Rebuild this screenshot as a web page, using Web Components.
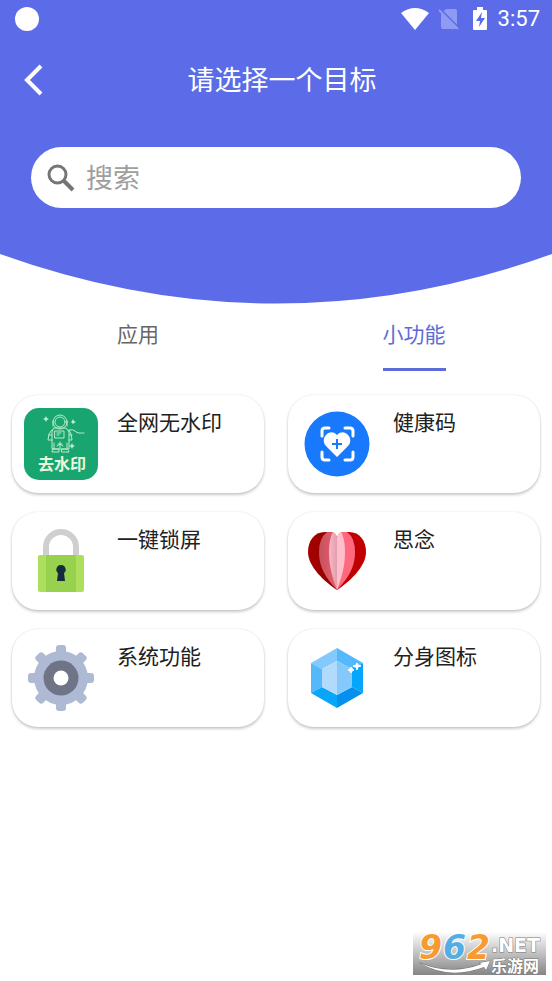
<!DOCTYPE html>
<html lang="zh-CN">
<head>
<meta charset="utf-8">
<meta name="viewport" content="width=device-width, initial-scale=1">
<title>请选择一个目标</title>
<style>
  body {
    margin: 0;
    background: #fff;
    color: #212121;
    font-family: Roboto, "Noto Sans CJK SC", sans-serif;
    --primary: #5c6ce8;
  }
  svg { display: block; }
</style>
</head>
<body>
<app-page>
  <app-header slot="header" heading="请选择一个目标">
    <status-bar slot="status" time="3:57"></status-bar>
    <search-field placeholder="搜索"></search-field>
  </app-header>

  <tab-bar>
    <tab-item label="应用"></tab-item>
    <tab-item label="小功能" selected></tab-item>
  </tab-bar>

  <feature-grid>
    <feature-card label="全网无水印">
      <svg width="74" height="72" viewBox="0 0 74 72">
        <rect width="74" height="72" rx="15" fill="#19a56f"/>
        <g fill="none" stroke="#b9ecc9" stroke-width="1" stroke-linejoin="round" stroke-linecap="round">
          <circle cx="36" cy="14" r="7"/>
          <circle cx="36" cy="14" r="5"/>
          <path d="M29 13v5M43 13v5M30 20h12l3 4v17H28V24zM28 22l-3 4-1 6h4M45 22l2 4 1 6h-3M25 27h3M45 27h3"/>
          <path d="M31 23h9v7h-9zM33 25h4M33 27h2M30 41v-6M43 41v-6M36 34v6M33 38l3-2 3 2M34 36h4"/>
          <path d="M29 41h6v3h-7q0-2 1-3zM38 41h5q2 1 2 3h-7zM45 22q4-1 6 1t4 2 5 0"/>
        </g>
        <path d="M22 8l1 2 2 1-2 1-1 2-1-2-2-1 2-1zM49 11l1 2 2 1-2 1-1 1-1-1-1-1 1-1zM48 35l1 2 2 1-2 1-1 2-1-2-2-1 2-1z" fill="#b9ecc9"/>
        <text x="38" y="62" text-anchor="middle" font-family="Noto Sans CJK SC, sans-serif" font-size="16" font-weight="700" fill="#e9f8dc">去水印</text>
      </svg>
    </feature-card>

    <feature-card label="健康码">
      <svg width="66" height="66" viewBox="0 0 66 66">
        <circle cx="33" cy="33" r="32.500" fill="#1879fc"/>
        <g fill="none" stroke="#fff" stroke-width="3" stroke-linecap="round" stroke-linejoin="round">
          <path d="M18 25v-5q0-3 3-3h4M41 17h5q3 0 3 3v5M49 41v5q0 3-3 3h-5M25 49h-4q-3 0-3-3v-5"/>
        </g>
        <path d="M33 24c4-4 8-3 11 0s3 8 0 11L33 46 22 35c-3-3-3-8 0-11s7-4 11 0z" fill="#fff"/>
        <path d="M33 28v10M28 33h10" stroke="#1879fc" stroke-width="2"/>
      </svg>
    </feature-card>

    <feature-card label="一键锁屏">
      <svg width="48" height="64" viewBox="0 0 48 64">
        <path d="M9 28V18a15 15 0 0 1 30 0v10" fill="none" stroke="#cfcfcf" stroke-width="6"/>
        <rect x="1" y="26" width="46" height="37" rx="2" fill="#acdf5e"/>
        <path d="M9 26h30v37H9z" fill="#98d14d"/>
        <path d="M24 36a4.500 4.500 0 0 1 3 8l1 8h-8l1-8a4.500 4.500 0 0 1 3-8z" fill="#152c3d"/>
      </svg>
    </feature-card>

    <feature-card label="思念">
      <svg width="60" height="60" viewBox="0 0 60 60">
        <defs>
          <linearGradient id="fold-dark"><stop stop-color="#a80000"/><stop offset="1" stop-color="#8c0000"/></linearGradient>
          <linearGradient id="fold-rose"><stop stop-color="#c4525e"/><stop offset="1" stop-color="#e95f70"/></linearGradient>
          <linearGradient id="fold-pink"><stop stop-color="#ffb7c8"/><stop offset="1" stop-color="#df9fad"/></linearGradient>
        </defs>
        <path d="M30 59C18 51 1 36 1 21 1 10 7 1 18 1h7l5 5z" fill="url(#fold-dark)"/>
        <path d="M30 59c12-8 29-23 29-38C59 10 53 1 42 1h-7l-5 5z" fill="#c00000"/>
        <path d="M30 59C18 46 12 36 12 21q0-14 8-20h6l4 5z" fill="url(#fold-rose)"/>
        <path d="M30 59c12-13 18-23 18-38q0-14-8-20h-6l-4 5z" fill="#ff697d"/>
        <path d="M30 59c-5-14-8-24-8-38 0-10 2-17 4-20q3 1 4 5z" fill="url(#fold-pink)"/>
        <path d="M30 59c5-14 8-24 8-38 0-10-2-17-4-20q-3 1-4 5z" fill="#ffbdcd"/>
      </svg>
    </feature-card>

    <feature-card label="系统功能">
      <svg width="66" height="66" viewBox="0 0 66 66">
        <g fill="#aeb9d4">
          <circle cx="33" cy="33" r="27"/>
          <rect x="28" width="10" height="66" rx="3"/>
          <rect x="28" width="10" height="66" rx="3" transform="rotate(45 33 33)"/>
          <rect x="28" width="10" height="66" rx="3" transform="rotate(90 33 33)"/>
          <rect x="28" width="10" height="66" rx="3" transform="rotate(135 33 33)"/>
        </g>
        <circle cx="33" cy="33" r="17.500" fill="#707487"/>
        <circle cx="33" cy="33" r="7.500" fill="#fff"/>
      </svg>
    </feature-card>

    <feature-card label="分身图标">
      <svg width="54" height="62" viewBox="0 0 54 62">
        <path d="M27 1v13L12 22 1 16z" fill="#84c9fc"/>
        <path d="M27 1l26 15-11 6-15-8z" fill="#55b8fb"/>
        <path d="M1 16l11 6v18L1 46z" fill="#55b8fb"/>
        <path d="M53 16l-11 6v18l11 6z" fill="#08a6fb"/>
        <path d="M1 46l11-6 15 8v13z" fill="#08a6fb"/>
        <path d="M53 46l-11-6-15 8v13z" fill="#0690ee"/>
        <path d="M27 14v34l-15-8V22z" fill="#b2dafc"/>
        <path d="M27 14v34l15-8V22z" fill="#84c9fc"/>
        <path d="M47 16l1 2 3 1-3 1-1 3-1-3-3-1 3-1zM41 20l1 2 2 1-2 1-1 2-1-2-2-1 2-1z" fill="#fff" stroke="#fff"/>
      </svg>
    </feature-card>
  </feature-grid>

  <site-mark slot="mark"></site-mark>
</app-page>

<script>
class AppPage extends HTMLElement {
  constructor() {
    super();
    this.attachShadow({ mode: 'open' });
    this.shadowRoot.innerHTML = `
      <style>
        :host { display: flex; flex-direction: column; min-height: 100vh; position: relative; }
        main { flex: 1; }
      </style>
      <slot name="header"></slot>
      <main><slot></slot></main>
      <slot name="mark"></slot>
    `;
  }
}
customElements.define('app-page', AppPage);

class StatusBar extends HTMLElement {
  connectedCallback() {
    this.attachShadow({ mode: 'open' });
    this.shadowRoot.innerHTML = `
      <style>
        :host { display: flex; justify-content: space-between; align-items: center; height: 37px; padding: 0 12px 0 15px; color: #fff; }
        .dot { width: 24px; height: 24px; border-radius: 50%; background: #fff; }
        .icons { display: flex; align-items: center; }
        svg { display: block; }
        .sim { margin-left: 9px; }
        .battery { margin: 0 11px 0 13px; }
        time { font-size: 22px; line-height: 24px; }
      </style>
      <span class="dot"></span>
      <div class="icons">
        <svg width="28" height="24" viewBox="0 0 28 24"><path d="M0 6Q14-4 28 6L14 23z" fill="#fff"/></svg>
        <svg class="sim" width="22" height="24" viewBox="0 0 22 24">
          <path d="M8 2h9q2 0 2 2v16q0 2-2 2H5q-2 0-2-2V7z" fill="#8f9bf2"/>
          <path d="M2 2l19 19" stroke="#5c6ce8" stroke-width="2"/>
          <path d="M1 3l19 19" stroke="#8f9bf2" stroke-width="2"/>
        </svg>
        <svg class="battery" width="14" height="24" viewBox="0 0 14 24">
          <path d="M4 0h6v3h3q1 0 1 1v18q0 1-1 1H1q-1 0-1-1V4q0-1 1-1h3z" fill="#fff"/>
          <path d="M9 5l-6 9h4l-1 6 6-9H8z" fill="#5c6ce8"/>
        </svg>
        <time>${this.getAttribute('time') || ''}</time>
      </div>
    `;
  }
}
customElements.define('status-bar', StatusBar);

class AppHeader extends HTMLElement {
  connectedCallback() {
    this.attachShadow({ mode: 'open' });
    this.shadowRoot.innerHTML = `
      <style>
        :host { display: block; color: #fff; }
        .fill { background: var(--primary); padding-bottom: 46px; }
        .bar { display: grid; grid-template-columns: 66px 1fr 54px; align-items: center; height: 86px; }
        button { display: flex; align-items: center; height: 66px; padding: 0 0 0 24px; border: 0; background: none; color: inherit; }
        h1 { margin: 0; padding-top: 2px; font-size: 27px; line-height: 40px; font-weight: 400; text-align: center; }
        .search { padding: 24px 31px 0 31px; }
        .curve { display: block; width: 100%; height: 50px; }
      </style>
      <header>
        <div class="fill">
          <slot name="status"></slot>
          <div class="bar">
            <button type="button" aria-label="返回">
              <svg width="20" height="32" viewBox="0 0 20 32"><path d="M17 2L3 16l14 14" fill="none" stroke="#fff" stroke-width="4"/></svg>
            </button>
            <h1>${this.getAttribute('heading') || ''}</h1>
          </div>
          <div class="search"><slot></slot></div>
        </div>
        <svg class="curve" viewBox="0 0 552 50" preserveAspectRatio="none"><path d="M0 0Q276 99 552 0z" fill="#5c6ce8"/></svg>
      </header>
    `;
  }
}
customElements.define('app-header', AppHeader);

class SearchField extends HTMLElement {
  connectedCallback() {
    this.attachShadow({ mode: 'open' });
    const text = this.getAttribute('placeholder') || '';
    this.shadowRoot.innerHTML = `
      <style>
        :host { display: block; }
        label { display: flex; align-items: center; gap: 11px; height: 61px; padding: 0 16px; border-radius: 31px; background: #fff; }
        svg { flex: none; }
        input {
          flex: 1;
          min-width: 0;
          height: 42px;
          padding: 2px 0 0;
          border: 0;
          outline: 0;
          background: none;
          font: inherit;
          font-size: 27px;
          color: #212121;
        }
        input::placeholder { color: #9e9e9e; opacity: 1; }
      </style>
      <label>
        <svg width="28" height="28" viewBox="0 0 28 28" fill="none" stroke="#757575">
          <circle cx="10.500" cy="10.500" r="8.500" stroke-width="3"/>
          <path d="M17 17l9 9" stroke-width="4"/>
        </svg>
        <input type="text" placeholder="${text}" aria-label="${text}">
      </label>
    `;
  }
}
customElements.define('search-field', SearchField);

class TabBar extends HTMLElement {
  constructor() {
    super();
    this.attachShadow({ mode: 'open' });
    this.shadowRoot.innerHTML = `
      <style>
        :host { display: block; }
        nav { display: flex; }
        ::slotted(tab-item) { flex: 1; }
      </style>
      <nav><slot></slot></nav>
    `;
  }

  connectedCallback() {
    this.addEventListener('click', (e) => {
      const tab = e.target.closest('tab-item');
      if (!tab) return;
      this.querySelectorAll('tab-item').forEach((t) => t.toggleAttribute('selected', t === tab));
    });
  }
}
customElements.define('tab-bar', TabBar);

class TabItem extends HTMLElement {
  static get observedAttributes() { return ['selected']; }

  constructor() {
    super();
    this.attachShadow({ mode: 'open' });
  }

  connectedCallback() { this.render(); }

  attributeChangedCallback() { this.render(); }

  render() {
    this.shadowRoot.innerHTML = `
      <style>
        :host { display: flex; justify-content: center; }
        button {
          height: 67px;
          padding: 0 0 2px;
          border: 0;
          border-bottom: 3px solid transparent;
          background: none;
          color: #666;
          font: inherit;
          font-size: 21px;
          line-height: 32px;
        }
        :host([selected]) button { color: #5e6cd8; border-color: #5e6cd8; }
      </style>
      <button type="button" aria-pressed="${this.hasAttribute('selected')}">${this.getAttribute('label') || ''}</button>
    `;
  }
}
customElements.define('tab-item', TabItem);

class FeatureGrid extends HTMLElement {
  constructor() {
    super();
    this.attachShadow({ mode: 'open' });
    this.shadowRoot.innerHTML = `
      <style>
        :host { display: grid; grid-template-columns: 1fr 1fr; gap: 19px 24px; padding: 24px 12px; }
      </style>
      <slot></slot>
    `;
  }
}
customElements.define('feature-grid', FeatureGrid);

class FeatureCard extends HTMLElement {
  connectedCallback() {
    this.attachShadow({ mode: 'open' });
    this.shadowRoot.innerHTML = `
      <style>
        :host { display: block; }
        button {
          display: flex;
          align-items: flex-start;
          gap: 19px;
          width: 100%;
          padding: 12px;
          border: 0;
          border-radius: 26px;
          background: #fff;
          box-shadow: 0 2px 3px rgba(0, 0, 0, .2), 0 0 2px rgba(0, 0, 0, .12);
          color: #212121;
          font: inherit;
          font-size: 21px;
          line-height: 32px;
          text-align: left;
        }
        .icon { display: flex; align-items: center; justify-content: center; width: 74px; height: 74px; }
      </style>
      <button type="button">
        <span class="icon"><slot></slot></span>
        <span>${this.getAttribute('label') || ''}</span>
      </button>
    `;
  }
}
customElements.define('feature-card', FeatureCard);

class SiteMark extends HTMLElement {
  constructor() {
    super();
    this.attachShadow({ mode: 'open' });
    // floats over the page in the bottom right corner
    this.shadowRoot.innerHTML = `
      <style>
        :host { display: block; position: absolute; right: 6px; bottom: 0; }
        svg { display: block; }
      </style>
      <svg width="133" height="60" viewBox="0 0 133 60">
        <defs>
          <linearGradient id="shade" x2="0" y2="1"><stop stop-color="#fafafa"/><stop offset="1" stop-color="#858585"/></linearGradient>
        </defs>
        <rect y="12" width="133" height="42" fill="url(#shade)"/>
        <g font-family="DejaVu Sans, sans-serif" font-weight="700" font-style="italic" font-size="33" stroke="#fff" stroke-width="2" paint-order="stroke">
          <text x="6" y="38" fill="#f79a32">9</text>
          <text x="30" y="38" fill="#55aee3">6</text>
          <text x="54" y="38" fill="#f79a32">2</text>
        </g>
        <g fill="#fff" stroke="#777" stroke-width="1" paint-order="stroke" font-weight="700">
          <path d="M7 42q30 13 62 1l-3-1 11-2-4 9-2-3Q36 59 7 42z"/>
          <text x="78" y="31" font-family="DejaVu Sans, sans-serif" font-size="19">.NET</text>
          <text x="78" y="51" font-family="Noto Sans CJK SC, sans-serif" font-size="16">乐游网</text>
        </g>
      </svg>
    `;
  }
}
customElements.define('site-mark', SiteMark);
</script>
</body>
</html>
